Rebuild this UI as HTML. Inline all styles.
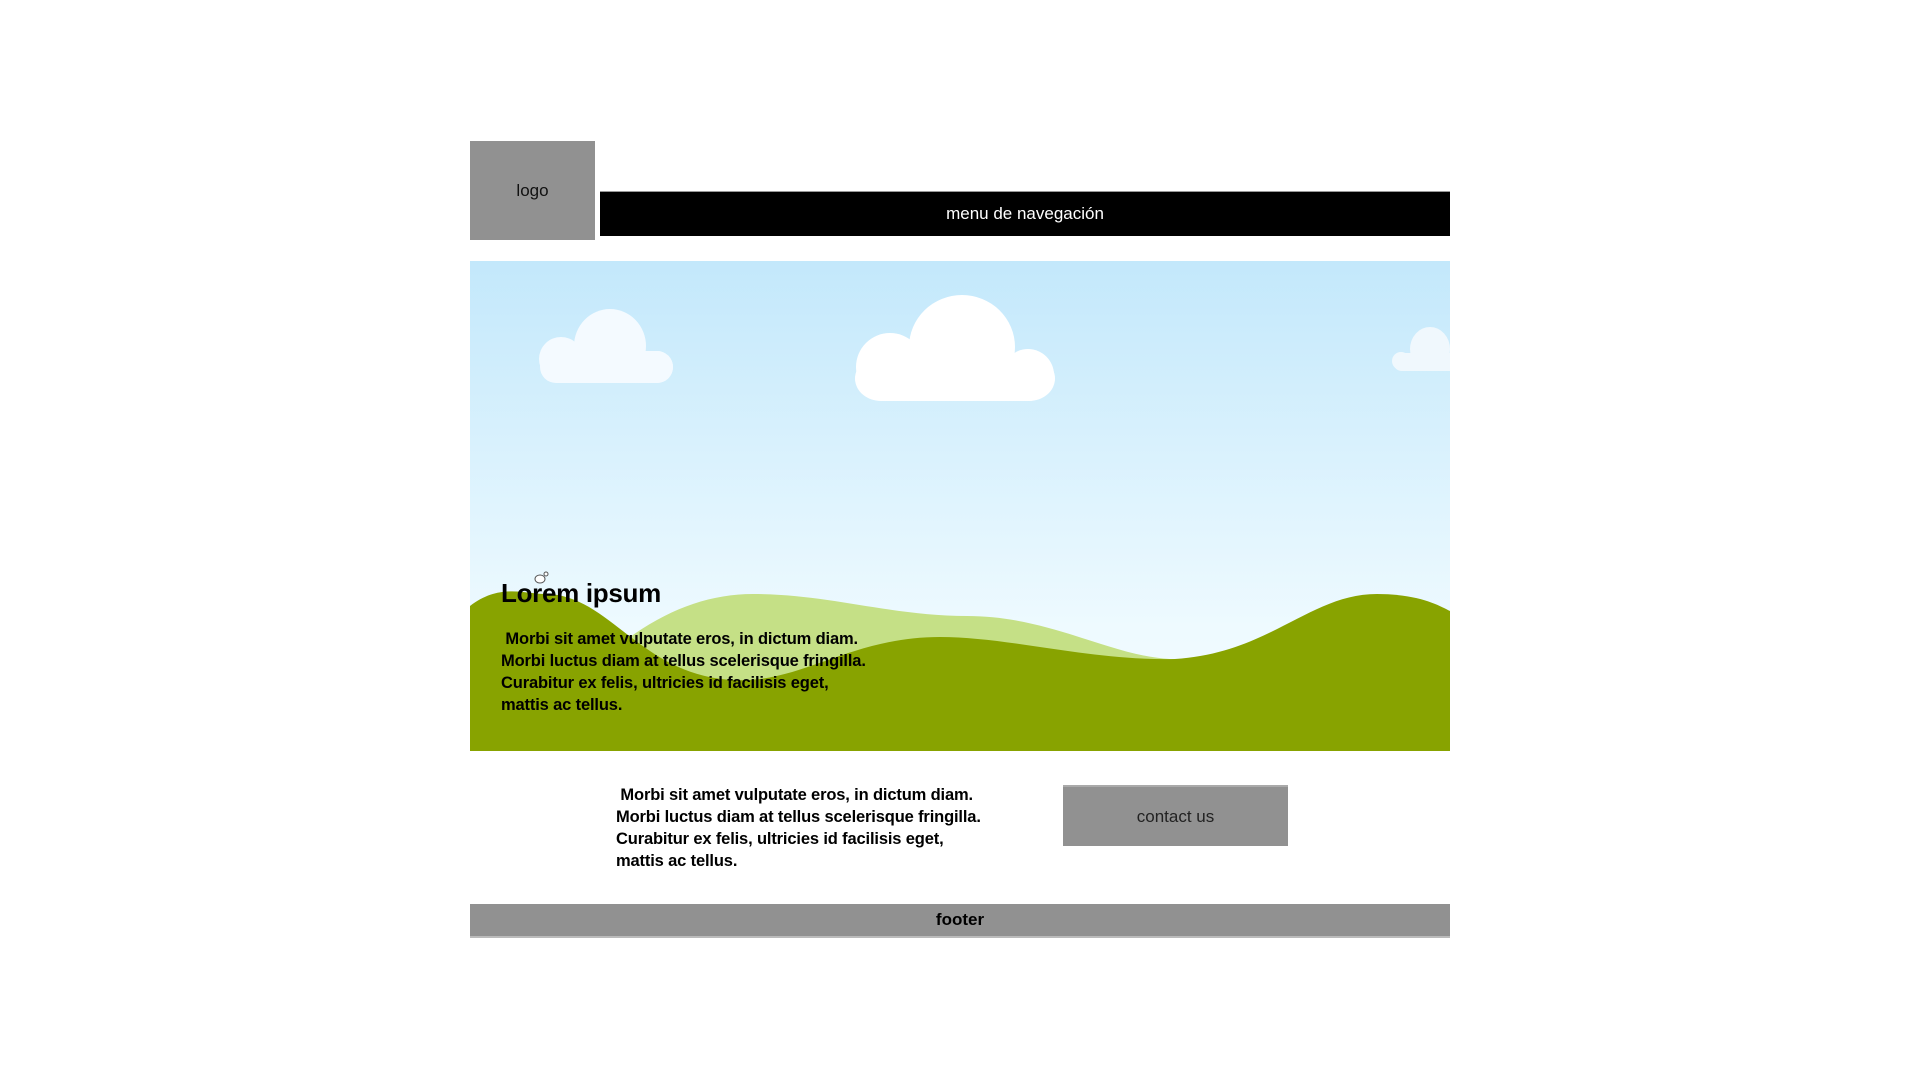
<!DOCTYPE html>
<html><head><meta charset="utf-8"><style>
body{margin:0;width:1920px;height:1080px;background:#fff;font-family:"Liberation Sans",sans-serif;position:relative;overflow:hidden}
.a{position:absolute}
#logo{left:470px;top:141px;width:125px;height:99px;background:#919191;display:flex;align-items:center;justify-content:center;font-size:17px;color:#111}
#nav{left:600px;top:191px;width:850px;height:45px;background:#000;color:#fff;display:flex;align-items:center;justify-content:center;font-size:17px;border-top:1px solid #999;box-sizing:border-box}
#hero{left:470px;top:261px;width:980px;height:490px;overflow:hidden}
.t{font-weight:bold;font-size:16.5px;line-height:22px;letter-spacing:-0.15px;color:#000}
#contact{left:1063px;top:785px;width:225px;height:61px;background:#919191;display:flex;align-items:center;justify-content:center;font-size:17px;color:#222;border-top:2px solid #aaa;box-sizing:border-box}
#footer{left:470px;top:904px;width:980px;height:34px;background:#919191;display:flex;align-items:center;justify-content:center;font-size:17px;font-weight:bold;border-bottom:2px solid #bbb;box-sizing:border-box}
</style></head><body>
<div id="logo" class="a">logo</div>
<div id="nav" class="a">menu de navegación</div>
<div id="hero" class="a">
<svg width="980" height="490" viewBox="0 0 980 490">
<defs><linearGradient id="g" x1="0" y1="0" x2="0" y2="1"><stop offset="0" stop-color="#c3e8fb"/><stop offset="0.75" stop-color="#eefaff"/><stop offset="1" stop-color="#f4fcff"/></linearGradient></defs>
<rect width="980" height="490" fill="url(#g)"/>
<g fill="#f4faff">
<rect x="70" y="90" width="133" height="32" rx="16"/><circle cx="91" cy="98" r="22"/><ellipse cx="140" cy="85" rx="36" ry="37"/><circle cx="187" cy="106" r="16"/>
</g>
<g fill="#fff">
<rect x="385" y="95" width="200" height="45" rx="26"/><circle cx="420" cy="106" r="34"/><ellipse cx="492" cy="86" rx="53" ry="52"/><circle cx="558" cy="114" r="26"/>
</g>
<g fill="#f0f8fd"><rect x="923" y="92" width="70" height="18" rx="9"/><circle cx="931" cy="100" r="9"/><ellipse cx="960" cy="88" rx="20" ry="22"/></g>
<path d="M100,430 C160,365 220,333 283,333 C360,333 420,355 497,355 C580,355 640,395 700,398 C740,402 760,402 790,400 L790,490 L100,490Z" fill="#c5e086"/>
<path d="M0,345 C30,322 55,333 75,333 C140,333 170,415 264,419 C330,423 380,376 470,376 C540,376 620,400 705,398 C800,392 840,333 907,333 C950,333 970,345 980,350 L980,490 L0,490Z" fill="#88a300"/>
<g stroke="#555" stroke-width="1" fill="#fff"><ellipse cx="70" cy="318" rx="5" ry="4"/><circle cx="76" cy="313" r="2"/></g>
</svg>
<div class="a" style="left:31px;top:317px;font-weight:bold;font-size:26px;letter-spacing:-0.3px">Lorem ipsum</div>
<div class="a t" style="left:31px;top:367px">&nbsp;Morbi sit amet vulputate eros, in dictum diam.<br>Morbi luctus diam at tellus scelerisque fringilla.<br>Curabitur ex felis, ultricies id facilisis eget,<br>mattis ac tellus.</div>
</div>
<div class="a t" style="left:616px;top:784px">&nbsp;Morbi sit amet vulputate eros, in dictum diam.<br>Morbi luctus diam at tellus scelerisque fringilla.<br>Curabitur ex felis, ultricies id facilisis eget,<br>mattis ac tellus.</div>
<div id="contact" class="a">contact us</div>
<div id="footer" class="a">footer</div>
</body></html>
